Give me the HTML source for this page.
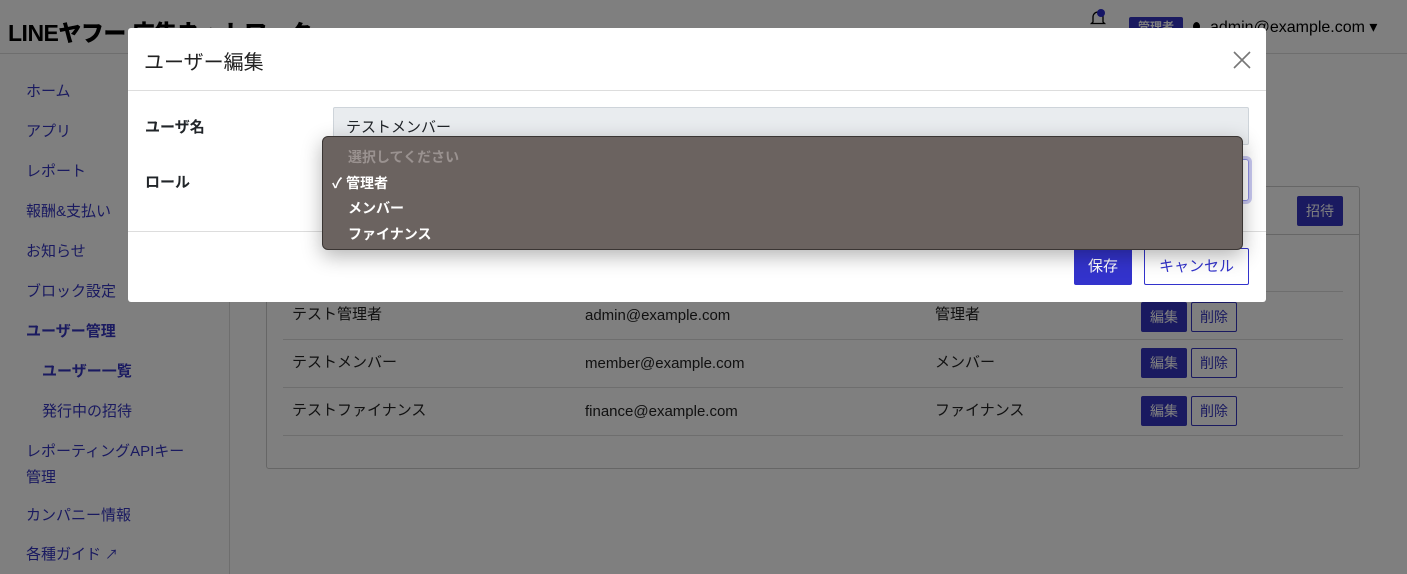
<!DOCTYPE html>
<html><head><meta charset="utf-8"><style>
*{box-sizing:border-box;margin:0;padding:0}
body{width:1407px;height:574px;overflow:hidden;position:relative;background:#fff;font-family:"Liberation Sans","Noto Sans CJK JP",sans-serif;color:#212529}
.abs{position:absolute}
.hdr{left:0;top:0;width:1407px;height:54px;border-bottom:1px solid #ddd}
.logo{left:8px;top:14px;font-size:23px;font-weight:900;color:#000;letter-spacing:-0.5px}
.side{left:0;top:55px;width:230px;height:519px;border-right:1px solid #ddd}
.nav{font-size:15px;color:#3434c0;position:absolute;left:26px}
.card{left:266px;top:186px;width:1094px;height:283px;border:1px solid #ccc;border-radius:3px}
.line{height:1px;background:#ddd;position:absolute}
.cell{position:absolute;font-size:15px;color:#222}
.bp{position:absolute;background:#3434c0;color:#fff;font-size:14px;border-radius:2px;text-align:center;line-height:30px}
.bo{position:absolute;border:1px solid #3434c0;color:#3434c0;font-size:14px;border-radius:2px;text-align:center;line-height:28px;background:#fff}
.ov{left:0;top:0;width:1407px;height:574px;background:rgba(0,0,0,.5)}
.modal{left:128px;top:28px;width:1138px;height:274px;background:#fff;border-radius:3px}
.dd{left:322px;top:136px;width:921px;height:114px;background:#6b6360;border:1px solid #3a3533;border-radius:6px;box-shadow:0 6px 20px rgba(0,0,0,.3)}
.di{position:absolute;left:25px;font-size:14px;font-weight:bold;color:#fff}
</style></head><body>
<div class="abs hdr"></div>
<div class="abs logo">LINEヤフー 広告ネットワーク</div>
<svg class="abs" style="left:1089px;top:9px" width="18" height="18" viewBox="0 0 18 18"><path d="M4 13V8a5 5 0 0 1 10 0v5l1.5 1.5h-13z" fill="none" stroke="#000" stroke-width="1.3"/><circle cx="12" cy="4" r="4" fill="#2a2acc"/></svg>
<div class="abs" style="left:1129px;top:17px;width:54px;height:20px;background:#3434c0;color:#fff;font-size:12px;font-weight:bold;text-align:center;line-height:20px;border-radius:2px">管理者</div>
<div class="abs" style="left:1193px;top:22px;width:7px;height:9px;border-radius:50%;background:#000"></div>
<div class="abs" style="left:1210px;top:17px;font-size:16px;color:#000">admin@example.com ▾</div>
<div class="abs side"></div>
<div class="nav" style="top:80px">ホーム</div>
<div class="nav" style="top:120px">アプリ</div>
<div class="nav" style="top:160px">レポート</div>
<div class="nav" style="top:200px">報酬&amp;支払い</div>
<div class="nav" style="top:240px">お知らせ</div>
<div class="nav" style="top:280px">ブロック設定</div>
<div class="nav" style="top:320px;font-weight:bold">ユーザー管理</div>
<div class="nav" style="top:360px;left:42px;font-weight:bold">ユーザー一覧</div>
<div class="nav" style="top:400px;left:42px">発行中の招待</div>
<div class="nav" style="top:439px;line-height:26px">レポーティングAPIキー<br>管理</div>
<div class="nav" style="top:504px">カンパニー情報</div>
<div class="nav" style="top:543px">各種ガイド <span style="font-size:13px">↗</span></div>
<div class="abs card"></div>
<div class="bp" style="left:1297px;top:196px;width:46px">招待</div>
<div class="line" style="left:267px;top:234px;width:1092px;background:#ccc"></div>
<div class="line" style="left:283px;top:291px;width:1060px"></div>
<div class="line" style="left:283px;top:339px;width:1060px"></div>
<div class="line" style="left:283px;top:387px;width:1060px"></div>
<div class="line" style="left:283px;top:435px;width:1060px"></div>
<div class="cell" style="left:292px;top:303px">テスト管理者</div><div class="cell" style="left:585px;top:307px">admin@example.com</div><div class="cell" style="left:935px;top:303px">管理者</div>
<div class="cell" style="left:292px;top:351px">テストメンバー</div><div class="cell" style="left:585px;top:355px">member@example.com</div><div class="cell" style="left:935px;top:351px">メンバー</div>
<div class="cell" style="left:292px;top:399px">テストファイナンス</div><div class="cell" style="left:585px;top:403px">finance@example.com</div><div class="cell" style="left:935px;top:399px">ファイナンス</div>
<div class="bp" style="left:1141px;top:302px;width:46px">編集</div><div class="bo" style="left:1191px;top:302px;width:46px">削除</div>
<div class="bp" style="left:1141px;top:348px;width:46px">編集</div><div class="bo" style="left:1191px;top:348px;width:46px">削除</div>
<div class="bp" style="left:1141px;top:396px;width:46px">編集</div><div class="bo" style="left:1191px;top:396px;width:46px">削除</div>
<div class="abs ov"></div>
<div class="abs modal">
 <div class="abs" style="left:16px;top:18px;font-size:20px;color:#222">ユーザー編集</div>
 <svg class="abs" style="left:1104px;top:22px" width="20" height="20" viewBox="0 0 20 20"><path d="M2 2L18 18M18 2L2 18" stroke="#777" stroke-width="1.6"/></svg>
 <div class="line" style="left:0;top:62px;width:1138px"></div>
 <div class="abs" style="left:17px;top:88px;font-size:15px;font-weight:bold">ユーザ名</div>
 <div class="abs" style="left:205px;top:79px;width:916px;height:38px;background:#e9ecef;border:1px solid #ced4da;border-radius:2px;font-size:15px;padding:8px 12px">テストメンバー</div>
 <div class="abs" style="left:17px;top:143px;font-size:15px;font-weight:bold">ロール</div>
 <div class="abs" style="left:205px;top:131px;width:916px;height:42px;border:1px solid #8c8ce0;box-shadow:0 0 0 3px #c8c8f0;border-radius:3px"></div>
 <div class="line" style="left:0;top:203px;width:1138px"></div>
 <div class="abs" style="left:946px;top:220px;width:58px;height:37px;background:#3333cc;color:#fff;font-size:15px;text-align:center;line-height:37px;border-radius:2px">保存</div>
 <div class="abs" style="left:1016px;top:220px;width:105px;height:37px;border:1px solid #3333cc;color:#3333cc;font-size:15px;text-align:center;line-height:35px;border-radius:2px">キャンセル</div>
</div>
<div class="abs dd">
 <div class="di" style="top:10px;color:#9a9290">選択してください</div>
 <div class="di" style="top:36px;left:9px">✓ 管理者</div>
 <div class="di" style="top:61px">メンバー</div>
 <div class="di" style="top:87px">ファイナンス</div>
</div>
</body></html>
